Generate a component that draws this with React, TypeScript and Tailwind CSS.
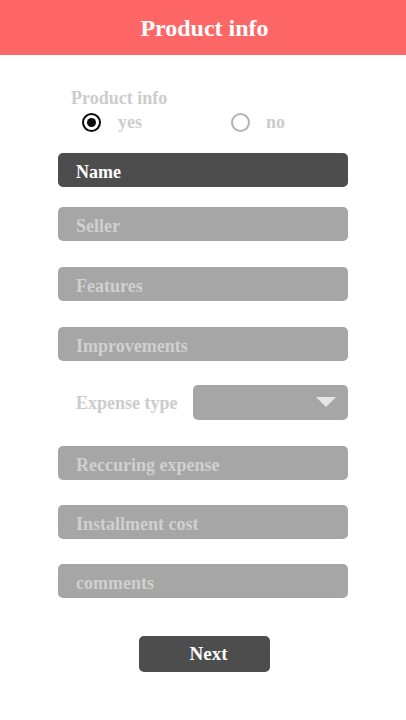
import React, { useState } from "react";

const fields = [
  { label: "Seller", mt: "mt-[20px]" },
  { label: "Features", mt: "mt-[26px]" },
  { label: "Improvements", mt: "mt-[26px]" },
];

const fieldsBottom = [
  { label: "Reccuring expense", mt: "mt-[26px]" },
  { label: "Installment cost", mt: "mt-[25px]" },
  { label: "comments", mt: "mt-[25px]" },
];

function Radio({ checked }: { checked: boolean }) {
  return (
    <span
      className={`flex h-[19px] w-[19px] items-center justify-center rounded-full border-[2.5px] ${
        checked ? "border-[#0a0a0a]" : "border-[#b3b3b3]"
      }`}
    >
      {checked && <span className="h-[9px] w-[9px] rounded-full bg-[#0a0a0a]" />}
    </span>
  );
}

function Field({ label, mt }: { label: string; mt: string }) {
  return (
    <div
      className={`${mt} flex h-[34px] w-full items-center rounded-[5px] bg-[#a6a6a6] px-[18px] pt-[5px] text-[18px] font-bold text-[#d0d0d0]`}
    >
      {label}
    </div>
  );
}

export default function App() {
  const [hasInfo, setHasInfo] = useState(true);

  return (
    <div
      className="min-h-[720px] w-[406px] bg-white"
      style={{ fontFamily: '"Liberation Serif", "Times New Roman", serif' }}
    >
      <div className="flex h-[55px] items-center justify-center bg-[#ff6666] pl-[3px] text-[24px] font-bold text-white">
        Product info
      </div>

      <div className="mx-[58px] flex flex-col">
        <div className="mt-[33px] pl-[13px] text-[18px] font-bold leading-[20px] text-[#cccccc]">
          Product info
        </div>
        <div className="mt-[1px] flex items-center text-[18px] font-bold text-[#cccccc]">
          <button
            type="button"
            onClick={() => setHasInfo(true)}
            className="ml-[24px] flex items-center gap-[17px]"
          >
            <Radio checked={hasInfo} />
            <span>yes</span>
          </button>
          <button
            type="button"
            onClick={() => setHasInfo(false)}
            className="ml-[89px] flex items-center gap-[16px]"
          >
            <Radio checked={!hasInfo} />
            <span>no</span>
          </button>
        </div>

        <div className="mt-[17px] flex h-[34px] w-full items-center rounded-[5px] bg-[#4d4d4d] px-[18px] pt-[4px] text-[18px] font-bold text-white">
          Name
        </div>

        {fields.map((f) => (
          <Field key={f.label} label={f.label} mt={f.mt} />
        ))}

        <div className="mt-[24px] flex items-center">
          <span className="ml-[18px] w-[117px] pt-[2px] text-[18px] font-bold text-[#cccccc]">
            Expense type
          </span>
          <div className="flex h-[35px] flex-1 items-center justify-end rounded-[5px] bg-[#a6a6a6] pr-[12px]">
            <svg width="20" height="11" viewBox="0 0 20 11">
              <polygon points="0,0 20,0 10,10" fill="#e6e6e6" />
            </svg>
          </div>
        </div>

        {fieldsBottom.map((f) => (
          <Field key={f.label} label={f.label} mt={f.mt} />
        ))}

        <div className="mt-[38px] flex justify-center pl-[3px]">
          <button
            type="button"
            className="h-[36px] w-[131px] rounded-[5px] bg-[#4d4d4d] pl-[8px] text-[19px] font-bold text-white"
          >
            Next
          </button>
        </div>
      </div>
    </div>
  );
}
